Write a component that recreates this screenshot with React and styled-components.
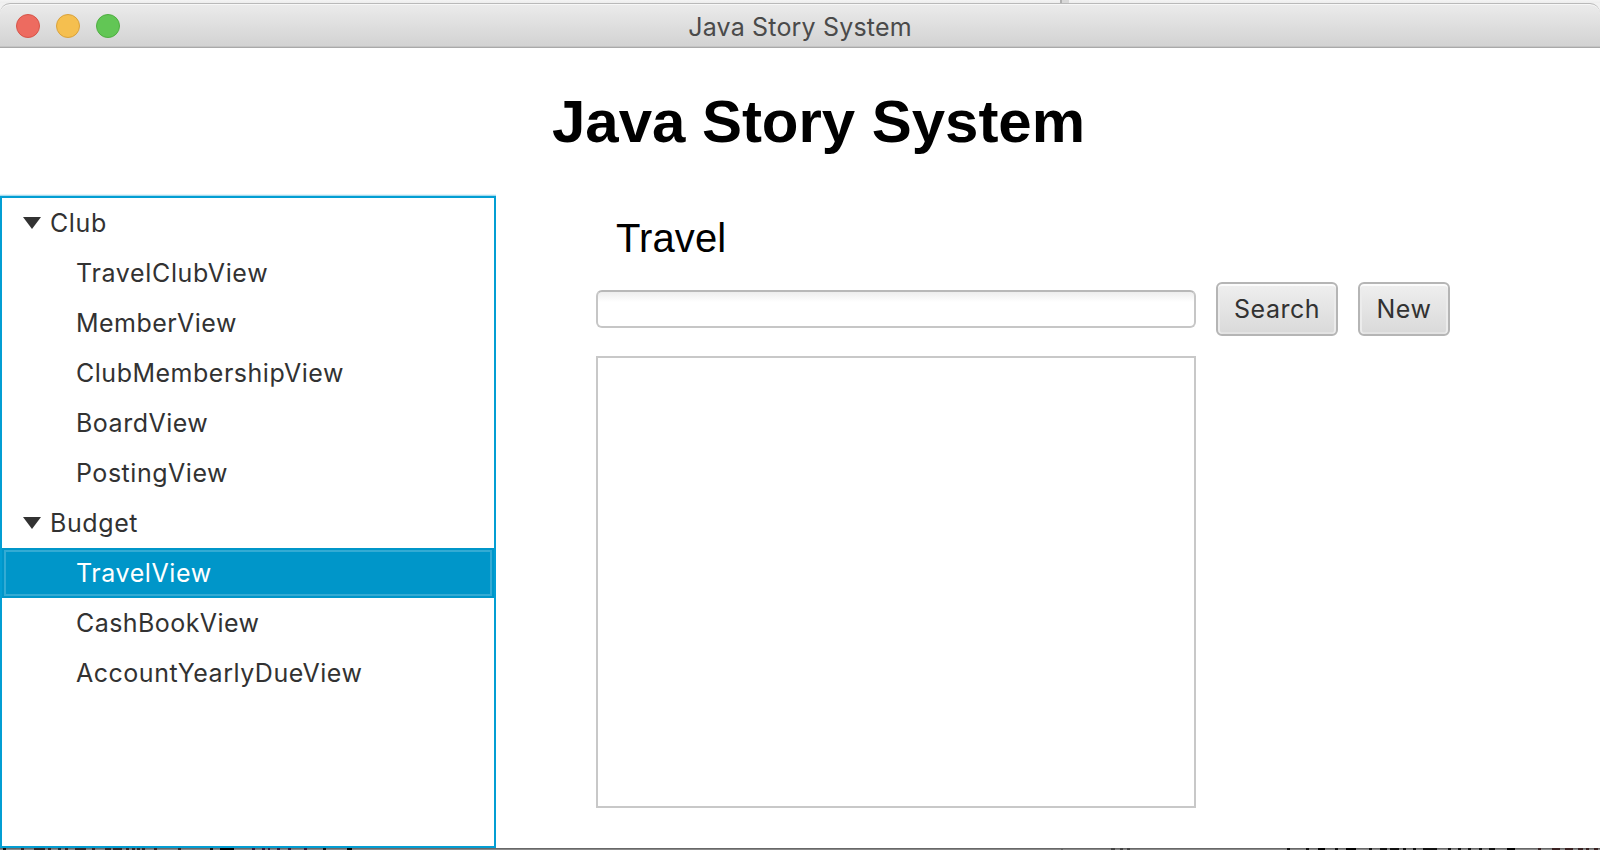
import React from "react";
import styled, { createGlobalStyle } from "styled-components";

const Global = createGlobalStyle`
  *{box-sizing:border-box}
  body{margin:0;background:#fff;overflow:hidden}
`;
const ui = `"Inter","Liberation Sans",sans-serif`;

const Screen = styled.div`
  display:flex;flex-direction:column;width:1600px;height:850px;overflow:hidden;
  background:#f1f1f1;
`;
const Behind = styled.div`
  height:3px;flex:none;display:flex;padding-left:1060px;
  background:linear-gradient(#f4f4f4,#ededed);
  &::before{content:"";width:2px;background:#b0b0b0}
  &::after{content:"";width:7px;background:#d8d8d8}
`;
const TitleBar = styled.header`
  height:45px;flex:none;display:grid;grid-template-columns:1fr auto 1fr;align-items:center;
  border-top:1px solid #b9b9b9;border-bottom:1px solid #a9a9a9;border-radius:10px 10px 0 0;
  background:linear-gradient(#ebebeb,#d2d2d2);
  box-shadow:inset 0 1px 0 #f7f7f7,inset 0 -1px 0 #c4c4c4;
`;
const Lights = styled.div`display:flex;gap:16px;padding-left:16px;`;
const Light = styled.i`
  width:24px;height:24px;border-radius:50%;background:${p => p.$fill};border:1px solid ${p => p.$edge};
`;
const Caption = styled.span`
  padding-top:2px;font:400 25px/30px ${ui};color:#4a4a4a;letter-spacing:.18px;white-space:nowrap;
`;
const Body = styled.main`flex:1;min-height:0;display:flex;flex-direction:column;background:#fff;`;
const Heading = styled.h1`
  margin:0;height:148px;flex:none;padding:39px 0 0 552px;
  font:700 60px/70px "Liberation Sans",Arial,sans-serif;color:#000;white-space:nowrap;
  letter-spacing:-.04px;
`;
const Columns = styled.div`flex:1;min-height:0;display:flex;`;
const Tree = styled.nav`
  width:496px;border:2px solid #039ed3;background:#fff;box-shadow:0 -1px 0 #a8dcef,0 -2px 0 #e4f5fb;
`;
const Row = styled.div`
  height:50px;display:flex;align-items:center;position:relative;
  padding-left:${p => (p.$leaf ? 74 : 21)}px;
  font:400 25px/30px ${ui};letter-spacing:${p => p.$track}px;white-space:nowrap;
  color:${p => (p.$on ? "#fff" : "#323232")};
  background:${p => (p.$on ? "#0096c9" : "transparent")};
  &::after{content:"";position:absolute;inset:2px;border:${p => (p.$on ? "2px solid #33abd4" : "0")}}
`;
const Arrow = styled.i`
  width:18px;height:12px;margin-right:9px;background:#323232;clip-path:polygon(0 0,100% 0,50% 100%);
`;
const Pane = styled.section`
  padding:19px 0 0 100px;display:flex;flex-direction:column;
`;
const PaneTitle = styled.h2`
  margin:0 0 21px;padding-left:20px;font:400 40px/46px "Liberation Sans",Arial,sans-serif;color:#000;
  letter-spacing:.1px;
`;
const SearchRow = styled.div`display:flex;align-items:center;gap:20px;height:54px;margin-bottom:20px;`;
const Field = styled.input`
  width:600px;height:38px;border:2px solid #c6c6c6;border-top-color:#b8b8b8;border-radius:6px;outline:0;
  background:linear-gradient(#ededed,#fff 10px);padding:0 12px;font:400 25px ${ui};
`;
const Button = styled.button`
  width:${p => p.$w}px;height:54px;padding:0;border:2px solid #b5b5b5;border-radius:6px;
  background:linear-gradient(#efefef,#d9d9d9);
  box-shadow:inset 0 2px 0 #fbfbfb,inset 2px 0 0 #ececec,inset -2px 0 0 #ececec,inset 0 -2px 0 #e3e3e3;
  font:400 25px/30px ${ui};color:#323232;letter-spacing:.5px;
`;
const List = styled.div`width:600px;height:452px;border:2px solid #c8c8c8;background:#fff;`;
const Below = styled.svg`
  display:block;width:1600px;height:2px;flex:none;background:linear-gradient(#686868 50%,#8a8a8a 50%);
`;

const rows = [
  ["Club", 0, 0.6], ["TravelClubView", 1, 0.66], ["MemberView", 1, 0.46], ["ClubMembershipView", 1, 0.51],
  ["BoardView", 1, 0.5], ["PostingView", 1, 0.53], ["Budget", 0, 0.6], ["TravelView", 1, 0.58, true],
  ["CashBookView", 1, 0.44], ["AccountYearlyDueView", 1, 0.51],
];

// Slivers of the window behind: [x, width, colour]
const slivers = [
  [3, 3, "#111"], [21, 3, "#3a2222"], [34, 11, "#332626"], [48, 3, "#3a2222"], [58, 3, "#222b33"],
  [65, 3, "#3a2222"], [75, 11, "#332626"], [92, 3, "#3a2222"], [105, 6, "#332626"], [113, 9, "#332626"],
  [126, 3, "#3a2222"], [132, 3, "#332626"], [137, 3, "#332626"], [142, 3, "#332626"], [154, 3, "#3a2222"],
  [178, 3, "#3a2222"], [210, 3, "#111"], [220, 14, "#000"], [252, 3, "#3a1838"], [262, 3, "#3a1838"],
  [268, 2, "#3a1838"], [277, 3, "#3a1838"], [288, 3, "#3a1838"], [304, 3, "#3a1838"], [323, 3, "#111"],
  [347, 5, "#000"], [1061, 2, "#666"], [1111, 4, "#444"], [1120, 3, "#444"], [1127, 3, "#444"],
  [1287, 3, "#111"], [1306, 3, "#111"], [1318, 7, "#000"], [1335, 3, "#111"], [1346, 10, "#000"],
  [1369, 3, "#111"], [1380, 7, "#111"], [1390, 9, "#111"], [1403, 3, "#111"], [1413, 3, "#111"],
  [1423, 14, "#111"], [1448, 3, "#111"], [1458, 3, "#111"], [1468, 3, "#111"], [1479, 3, "#111"],
  [1489, 6, "#111"], [1507, 8, "#000"], [1538, 3, "#3a2222"], [1552, 8, "#3a2222"], [1565, 8, "#3a2222"],
  [1578, 5, "#3a2222"], [1586, 3, "#3a2222"], [1594, 4, "#3a2222"],
];

export default function App() {
  return (
    <Screen>
      <Global />
      <Behind />
      <TitleBar>
        <Lights>
          <Light $fill="#ed6b60" $edge="#d65549" />
          <Light $fill="#f5bf4f" $edge="#d9a23c" />
          <Light $fill="#62c655" $edge="#4fae41" />
        </Lights>
        <Caption>Java Story System</Caption>
      </TitleBar>
      <Body>
        <Heading>Java Story System</Heading>
        <Columns>
          <Tree>
            {rows.map(([name, leaf, track, on]) => (
              <Row key={name} $leaf={leaf} $track={track} $on={on}>{!leaf && <Arrow />}<span>{name}</span></Row>
            ))}
          </Tree>
          <Pane>
            <PaneTitle>Travel</PaneTitle>
            <SearchRow>
              <Field aria-label="Travel" />
              <Button $w={122}>Search</Button>
              <Button $w={92}>New</Button>
            </SearchRow>
            <List />
          </Pane>
        </Columns>
      </Body>
      <Below viewBox="0 0 1600 2" aria-hidden="true">
        {slivers.map(([x, w, c]) => <rect key={x} x={x} width={w} height="2" fill={c} />)}
      </Below>
    </Screen>
  );
}
